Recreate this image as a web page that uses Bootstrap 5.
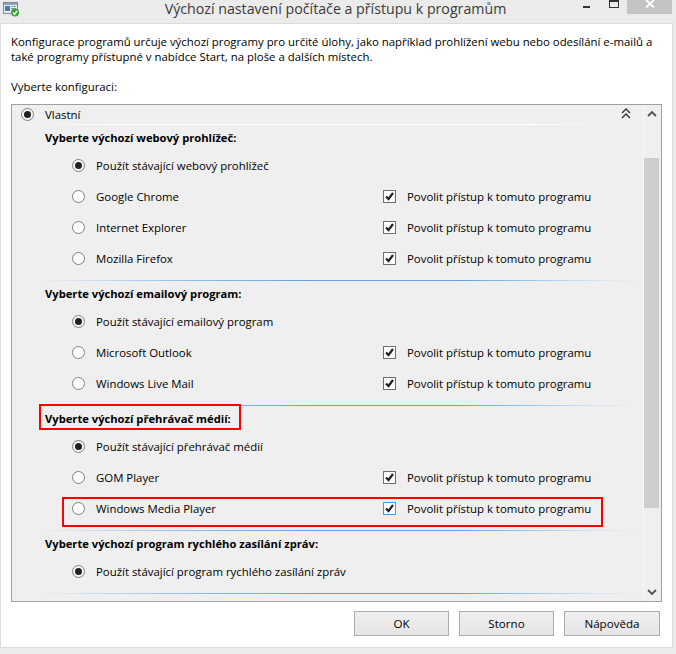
<!DOCTYPE html>
<html lang="cs">
<head>
  <meta charset="UTF-8" />
  <title>Výchozí nastavení počítače a přístupu k programům</title>
  <link href="https://cdn.jsdelivr.net/npm/bootstrap@5.3.0/dist/css/bootstrap.min.css" rel="stylesheet">
  <style>
    html, body { height: 654px; overflow: hidden; }
    body { background: #ebebeb; font-family: "Open Sans", "Noto Sans", sans-serif; font-size: 11.4px; color: #000; line-height: 15px; }
    .win-title { height: 23px; }
    .win-app-icon { width: 16px; height: 16px; margin: 1px 0 0 3px; flex: none; }
    .win-name { font-size: 14.2px; color: #3a3a3a; line-height: 18px; padding-left: 88px; }
    .win-controls { width: 112px; }
    .win-close { width: 45px; height: 14px; background: #c4c4c4; margin-right: 4px; }
    .win-client { background: #fff; border: 1px solid #dcdcdc; width: 673px; height: 625px; padding: 10px 10px 0 10px; }
    .intro { margin: 0 0 15px; }
    .pick-label { margin: 0 0 10px; height: 15px; }
    .cfg-box { width: 651px; height: 498px; border: 1px solid #a0a0a0; background: #efefef; position: relative; overflow: hidden; }
    .cfg-list { width: 632px; border-right: 1px solid #f8f8f8; flex: none; }
    .cfg-head { height: 20px; padding: 0 12px 2px 9px; position: relative; }
    .cfg-head::after { content: ""; position: absolute; left: 10px; right: 30px; bottom: 0; height: 1px; background: linear-gradient(90deg, #efefef, #fff 15%, #fff 85%, #efefef); }
    .sec-title { height: 25px; padding: 5px 0 0 33px; font-weight: 700; font-size: 11.2px; }
    .sec-row { height: 31px; padding-left: 60px; }
    .sec-name { width: 311px; }
    .sec-line { height: 1px; margin: 6px 0 0 25px; background: linear-gradient(90deg, #efefef, #8fbdee 25%, #5ba6ea 45%, #5ba6ea 70%, #d5e4f3 92%, #efefef); }
    .radio-dot { width: 13px; height: 13px; border: 1px solid #7f7f7f; border-radius: 50%; background: #fff; flex: none; margin-right: 11px; display: flex; align-items: center; justify-content: center; }
    .radio-dot.on { background: #f6f6f6; }
    .radio-dot.on::after { content: ""; width: 7px; height: 7px; background: #222; border-radius: 50%; }
    .tick-box { width: 13px; height: 13px; border: 1px solid #6e6e6e; background: #fff; flex: none; margin-right: 11px; display: flex; align-items: center; justify-content: center; }
    .tick-box.hot { border-color: #3c9bee; }
    .cfg-scroll { width: 17px; }
    .scroll-arrow { height: 17px; padding-right: 2px; }
    .scroll-track { flex: 1; padding-top: 36px; }
    .scroll-thumb { height: 350px; width: 15px; background: #cdcdcd; }
    .mark-box { position: absolute; border: 2px solid #f00; pointer-events: none; }
    .mark-one { left: 27px; top: 299px; width: 202px; height: 26px; }
    .mark-two { left: 50px; top: 392px; width: 541px; height: 30px; }
    .dlg-btn { width: 95px; height: 25px; background: linear-gradient(#f0f0f0, #e5e5e5); border: 1px solid #acacac; text-align: center; line-height: 23px; font-size: 11.6px; }
    .dlg-btn-wide { width: 96px; }
    .dlg-btns { padding-top: 9px; gap: 10px; width: 649px; }
  </style>
</head>
<body>
  <div class="win-title d-flex">
    <svg class="win-app-icon" viewBox="0 0 16 16">
      <rect x="0.5" y="1.5" width="14" height="11" fill="#e6ecf3" stroke="#7d8a99"/>
      <rect x="1" y="2" width="13" height="2" fill="#8fa3ba"/>
      <rect x="2" y="5" width="5" height="5" fill="#3f7fa8"/>
      <rect x="8" y="5" width="5" height="1" fill="#8a9ab0"/>
      <rect x="8" y="7" width="5" height="1" fill="#8a9ab0"/>
      <circle cx="12" cy="11.5" r="4" fill="#39a539"/>
      <path d="M10 11.5l1.600 1.800 2.600-3.400" fill="none" stroke="#fff" stroke-width="1.400"/>
    </svg>
    <div class="win-name flex-grow-1 text-center">Výchozí nastavení počítače a přístupu k programům</div>
    <div class="win-controls d-flex justify-content-end">
      <svg width="44" height="14" viewBox="0 0 44 14"><rect x="0" y="6" width="7" height="2" fill="#333"/><rect x="26.500" y="0.500" width="9" height="7" fill="none" stroke="#333"/><rect x="26" y="0" width="10" height="2" fill="#333"/></svg>
      <div class="win-close d-flex justify-content-center"><svg width="10" height="8" viewBox="0 0 10 8"><path d="M1 0l8 7.500M9 0l-8 7.500" fill="none" stroke="#fff" stroke-width="1.800"/></svg></div>
    </div>
  </div>

  <div class="win-client">
    <p class="intro">Konfigurace programů určuje výchozí programy pro určité úlohy, jako například prohlížení webu nebo odesílání e-mailů a<br>také programy přístupné v nabídce Start, na ploše a dalších místech.</p>
    <p class="pick-label">Vyberte konfiguraci:</p>

    <div class="cfg-box d-flex">
      <div class="cfg-list">
        <div class="cfg-head d-flex align-items-center">
          <span class="radio-dot on"></span><span class="flex-grow-1">Vlastní</span>
          <svg width="10" height="12" viewBox="0 0 10 12"><path d="M1 5l4-4 4 4M1 10l4-4 4 4" fill="none" stroke="#333" stroke-width="1.400"/></svg>
        </div>

        <div class="sec-title">Vyberte výchozí webový prohlížeč:</div>
        <div class="sec-row d-flex align-items-center"><span class="radio-dot on"></span><span>Použít stávající webový prohlížeč</span></div>
        <div class="sec-row d-flex align-items-center"><span class="sec-name d-flex align-items-center"><span class="radio-dot"></span>Google Chrome</span><span class="tick-box"><svg width="11" height="11" viewBox="0 0 11 11"><path d="M2 5.500l2.500 2.500 4.500-6" fill="none" stroke="#222" stroke-width="2.200"/></svg></span><span>Povolit přístup k tomuto programu</span></div>
        <div class="sec-row d-flex align-items-center"><span class="sec-name d-flex align-items-center"><span class="radio-dot"></span>Internet Explorer</span><span class="tick-box"><svg width="11" height="11" viewBox="0 0 11 11"><path d="M2 5.500l2.500 2.500 4.500-6" fill="none" stroke="#222" stroke-width="2.200"/></svg></span><span>Povolit přístup k tomuto programu</span></div>
        <div class="sec-row d-flex align-items-center"><span class="sec-name d-flex align-items-center"><span class="radio-dot"></span>Mozilla Firefox</span><span class="tick-box"><svg width="11" height="11" viewBox="0 0 11 11"><path d="M2 5.500l2.500 2.500 4.500-6" fill="none" stroke="#222" stroke-width="2.200"/></svg></span><span>Povolit přístup k tomuto programu</span></div>
        <div class="sec-line"></div>

        <div class="sec-title">Vyberte výchozí emailový program:</div>
        <div class="sec-row d-flex align-items-center"><span class="radio-dot on"></span><span>Použít stávající emailový program</span></div>
        <div class="sec-row d-flex align-items-center"><span class="sec-name d-flex align-items-center"><span class="radio-dot"></span>Microsoft Outlook</span><span class="tick-box"><svg width="11" height="11" viewBox="0 0 11 11"><path d="M2 5.500l2.500 2.500 4.500-6" fill="none" stroke="#222" stroke-width="2.200"/></svg></span><span>Povolit přístup k tomuto programu</span></div>
        <div class="sec-row d-flex align-items-center"><span class="sec-name d-flex align-items-center"><span class="radio-dot"></span>Windows Live Mail</span><span class="tick-box"><svg width="11" height="11" viewBox="0 0 11 11"><path d="M2 5.500l2.500 2.500 4.500-6" fill="none" stroke="#222" stroke-width="2.200"/></svg></span><span>Povolit přístup k tomuto programu</span></div>
        <div class="sec-line"></div>

        <div class="sec-title">Vyberte výchozí přehrávač médií:</div>
        <div class="sec-row d-flex align-items-center"><span class="radio-dot on"></span><span>Použít stávající přehrávač médií</span></div>
        <div class="sec-row d-flex align-items-center"><span class="sec-name d-flex align-items-center"><span class="radio-dot"></span>GOM Player</span><span class="tick-box"><svg width="11" height="11" viewBox="0 0 11 11"><path d="M2 5.500l2.500 2.500 4.500-6" fill="none" stroke="#222" stroke-width="2.200"/></svg></span><span>Povolit přístup k tomuto programu</span></div>
        <div class="sec-row d-flex align-items-center"><span class="sec-name d-flex align-items-center"><span class="radio-dot"></span>Windows Media Player</span><span class="tick-box hot"><svg width="11" height="11" viewBox="0 0 11 11"><path d="M2 5.500l2.500 2.500 4.500-6" fill="none" stroke="#222" stroke-width="2.200"/></svg></span><span>Povolit přístup k tomuto programu</span></div>
        <div class="sec-line"></div>

        <div class="sec-title">Vyberte výchozí program rychlého zasílání zpráv:</div>
        <div class="sec-row d-flex align-items-center"><span class="radio-dot on"></span><span>Použít stávající program rychlého zasílání zpráv</span></div>
        <div class="sec-line"></div>
      </div>

      <div class="cfg-scroll d-flex flex-column">
        <div class="scroll-arrow text-center"><svg width="10" height="17" viewBox="0 0 10 17"><path d="M1 11l4-4 4 4" fill="none" stroke="#505050" stroke-width="1.800"/></svg></div>
        <div class="scroll-track"><div class="scroll-thumb"></div></div>
        <div class="scroll-arrow text-center"><svg width="10" height="17" viewBox="0 0 10 17"><path d="M1 6l4 4 4-4" fill="none" stroke="#505050" stroke-width="1.800"/></svg></div>
      </div>

      <div class="mark-box mark-one"></div>
      <div class="mark-box mark-two"></div>
    </div>

    <div class="dlg-btns d-flex justify-content-end">
      <div class="dlg-btn">OK</div>
      <div class="dlg-btn">Storno</div>
      <div class="dlg-btn dlg-btn-wide">Nápověda</div>
    </div>
  </div>

  <script src="https://cdn.jsdelivr.net/npm/bootstrap@5.3.0/dist/js/bootstrap.bundle.min.js"></script>
</body>
</html>
